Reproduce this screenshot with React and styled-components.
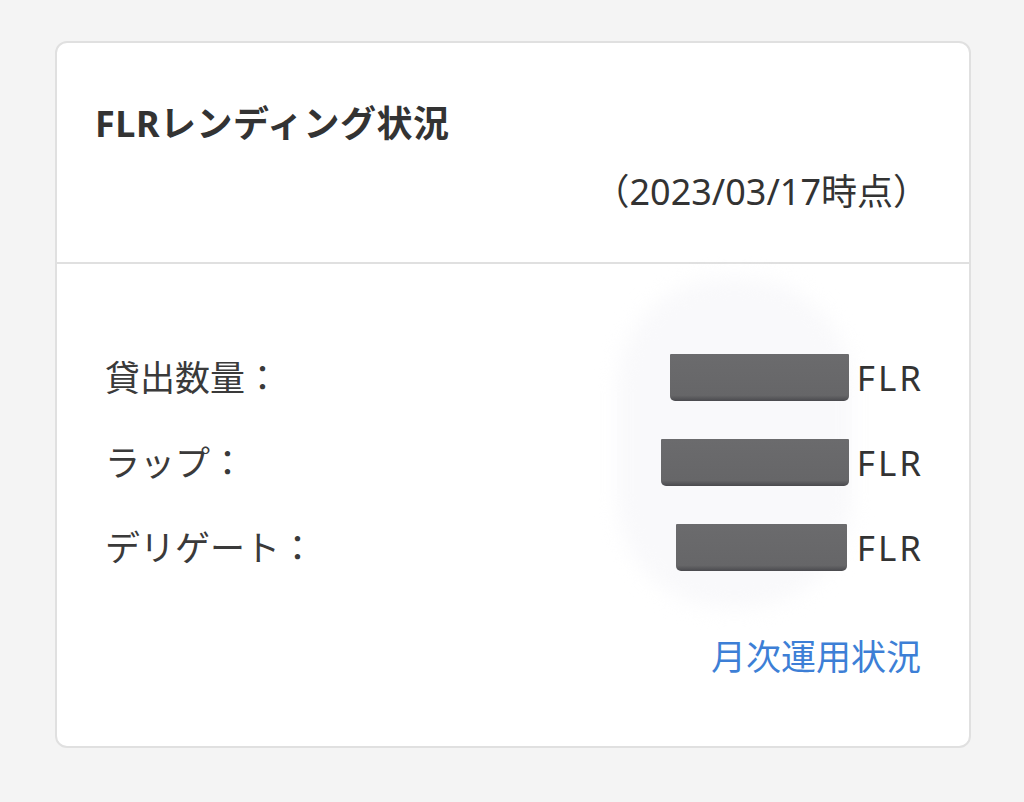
import React from "react";
import styled, { createGlobalStyle } from "styled-components";

const GlobalStyle = createGlobalStyle`
  html, body {
    margin: 0;
    padding: 0;
    background: #f4f4f4;
  }
  body {
    font-family: "Noto Sans", "Noto Sans CJK JP", sans-serif;
    color: #333;
  }
`;

const rows = [
  { label: "貸出数量：", width: 179, offset: 0 },
  { label: "ラップ：", width: 188, offset: 0 },
  { label: "デリゲート：", width: 171, offset: 2 },
];

function App() {
  return (
    <>
      <GlobalStyle />
      <Page>
        <Card>
          <Header>
            <Title>FLRレンディング状況</Title>
            <AsOf>（2023/03/17時点）</AsOf>
          </Header>
          <Body>
            <Rows>
              {rows.map((r) => (
                <Row key={r.label}>
                  <Label>{r.label}</Label>
                  <Value>
                    <Redacted style={{ width: r.width, marginRight: 8 + r.offset }} />
                    <Unit>FLR</Unit>
                  </Value>
                </Row>
              ))}
            </Rows>
            <MonthlyLink href="#">月次運用状況</MonthlyLink>
          </Body>
        </Card>
      </Page>
    </>
  );
}

const Page = styled.div`
  width: 1024px;
  height: 802px;
  padding: 41px 0 0 55px;
  box-sizing: border-box;
`;

const Card = styled.div`
  width: 916px;
  height: 707px;
  box-sizing: border-box;
  background: #fff;
  border: 2px solid #e0e0e0;
  border-radius: 12px;
  display: flex;
  flex-direction: column;
`;

const Header = styled.div`
  height: 221px;
  box-sizing: border-box;
  padding: 58px 50px 0 38px;
  border-bottom: 2px solid #e0e0e0;
  display: flex;
  flex-direction: column;
`;

const Title = styled.h2`
  margin: 0;
  font-size: 36px;
  font-weight: 700;
  line-height: 46px;
  letter-spacing: 0.5px;
  color: #333;
`;

const AsOf = styled.div`
  margin-top: 22px;
  align-self: flex-end;
  font-size: 36px;
  line-height: 46px;
  color: #333;
  margin-right: -10px;
`;

const Body = styled.div`
  position: relative;
  flex: 1;
  padding: 90px 48px 0 48px;
  display: flex;
  flex-direction: column;

  &::before {
    content: "";
    position: absolute;
    left: 560px;
    top: 14px;
    width: 235px;
    height: 330px;
    border-radius: 110px;
    background: #f9f9fb;
    filter: blur(10px);
  }
`;

const Rows = styled.div`
  position: relative;
  display: flex;
  flex-direction: column;
  gap: 38px;
`;

const Row = styled.div`
  display: flex;
  align-items: center;
  justify-content: space-between;
  height: 47px;
`;

const Label = styled.span`
  font-size: 35px;
  line-height: 47px;
  color: #3a3a3a;
`;

const Value = styled.span`
  display: flex;
  align-items: center;
`;

const Redacted = styled.span`
  display: block;
  height: 47px;
  background: linear-gradient(#6b6b6d 0%, #666668 88%, #4a4a4e 100%);
  border-radius: 1px 1px 5px 5px;
`;

const Unit = styled.span`
  font-size: 35px;
  line-height: 47px;
  color: #333;
  letter-spacing: 3px;
  margin-right: -3px;
`;

const MonthlyLink = styled.a`
  position: relative;
  align-self: flex-end;
  margin-top: 64px;
  font-size: 35px;
  line-height: 44px;
  color: #3d7fd6;
  text-decoration: none;
`;

export default App;
